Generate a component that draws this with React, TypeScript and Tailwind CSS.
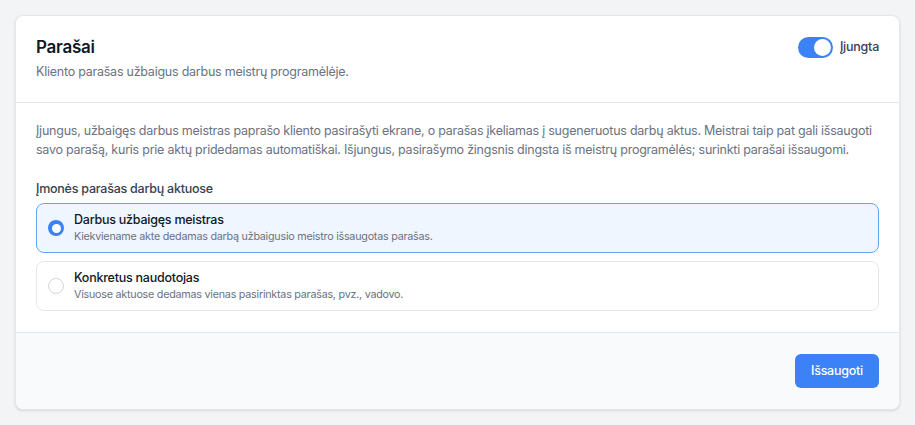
import { useState } from "react"

type Option = {
  id: string
  title: string
  description: string
}

const options: Option[] = [
  {
    id: "master",
    title: "Darbus užbaigęs meistras",
    description: "Kiekviename akte dedamas darbą užbaigusio meistro išsaugotas parašas.",
  },
  {
    id: "user",
    title: "Konkretus naudotojas",
    description: "Visuose aktuose dedamas vienas pasirinktas parašas, pvz., vadovo.",
  },
]

const Toggle = ({ checked, onChange }: { checked: boolean; onChange: () => void }) => {
  return (
    <button
      onClick={onChange}
      className={`flex h-[21px] w-[35px] items-center rounded-full px-[2px] ${
        checked ? "justify-end bg-[#3b82f6]" : "justify-start bg-gray-300"
      }`}
    >
      <span className="h-[17px] w-[17px] rounded-full bg-white" />
    </button>
  )
}

const Radio = ({ active }: { active: boolean }) => {
  if (active) {
    return (
      <span className="flex h-4 w-4 shrink-0 items-center justify-center rounded-full bg-[#3b82f6]">
        <span className="h-[9px] w-[9px] rounded-full bg-white" />
      </span>
    )
  }
  return <span className="h-4 w-4 shrink-0 rounded-full border border-[#d1d5db] bg-white" />
}

export default function App() {
  const [enabled, setEnabled] = useState(true)
  const [selected, setSelected] = useState("master")

  return (
    <div
      className="min-h-screen bg-[#f3f4f6] p-[15px] tracking-[-0.015em]"
      style={{ fontFamily: "Inter, 'Noto Sans', sans-serif" }}
    >
      <div className="overflow-hidden rounded-lg border border-[#e5e7eb] bg-white shadow-sm">
        {/* header */}
        <div className="flex items-start justify-between border-b border-[#e5e7eb] px-5 pb-[21px] pt-5">
          <div>
            <h1 className="text-[17px] font-semibold leading-[22px] text-[#111827]">Parašai</h1>
            <p className="mt-[5px] text-[12.5px] leading-[18px] text-[#6b7280]">
              Kliento parašas užbaigus darbus meistrų programėlėje.
            </p>
          </div>
          <div className="flex items-center gap-[7px] pt-[1px]">
            <Toggle checked={enabled} onChange={() => setEnabled(!enabled)} />
            <span className="text-[12.5px] font-medium text-[#374151]">Įjungta</span>
          </div>
        </div>

        {/* body */}
        <div className="px-5 pb-[21px] pt-[18px]">
          <p className="text-[12.5px] leading-[19px] text-[#6b7280]">
            Įjungus, užbaigęs darbus meistras paprašo kliento pasirašyti ekrane, o parašas įkeliamas į
            sugeneruotus darbų aktus. Meistrai taip pat gali išsaugoti savo parašą, kuris prie aktų
            pridedamas automatiškai. Išjungus, pasirašymo žingsnis dingsta iš meistrų programėlės; surinkti
            parašai išsaugomi.
          </p>

          <div className="mt-[21px] text-[12.5px] font-medium leading-[18px] text-[#374151]">
            Įmonės parašas darbų aktuose
          </div>

          <div className="mt-[5px] flex flex-col gap-2">
            {options.map((option) => {
              const active = selected === option.id
              return (
                <button
                  key={option.id}
                  onClick={() => setSelected(option.id)}
                  className={`flex h-[50px] items-center gap-[10px] rounded-lg border px-[11px] text-left ${
                    active ? "border-[#60a5fa] bg-[#eff6ff]" : "border-[#e5e7eb] bg-white"
                  }`}
                >
                  <Radio active={active} />
                  <span className="flex flex-col">
                    <span className="text-[12.5px] font-medium leading-[18px] text-[#111827]">
                      {option.title}
                    </span>
                    <span className="text-[10.75px] leading-[16px] text-[#6b7280]">{option.description}</span>
                  </span>
                </button>
              )
            })}
          </div>
        </div>

        {/* footer */}
        <div className="flex justify-end border-t border-[#e5e7eb] bg-[#f9fafb] px-5 py-[21px]">
          <button className="h-[34px] rounded-md bg-[#3b82f6] px-4 text-[12.5px] font-medium text-white">
            Išsaugoti
          </button>
        </div>
      </div>
    </div>
  )
}
